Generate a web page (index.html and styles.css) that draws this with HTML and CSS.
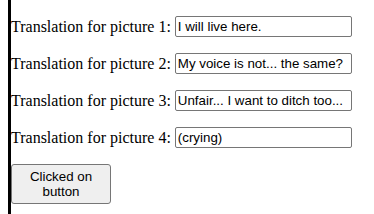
FILE: index.html
```html
<!DOCTYPE html>
<html lang="en">
<head>
  <meta charset="UTF-8">
  <meta name="viewport" content="width=device-width, initial-scale=1.0">
  <title>Translations</title>
  <link rel="stylesheet" href="styles.css">
</head>
<body>
  <div class="page">
    <p class="row">Translation for picture 1: <input type="text" class="answer" value="I will live here."></p>
    <p class="row">Translation for picture 2: <input type="text" class="answer" value="My voice is not... the same?"></p>
    <p class="row">Translation for picture 3: <input type="text" class="answer" value="Unfair... I want to ditch too..."></p>
    <p class="row">Translation for picture 4: <input type="text" class="answer" value="(crying)"></p>
    <button class="submit">Clicked on button</button>
  </div>
</body>
</html>
```

FILE: styles.css
```css
html, body {
  margin: 0;
  padding: 0;
  background-color: #fff;
}

.page {
  display: flow-root;
  margin-left: 8px;
  border-left: 3px solid #000;
  min-height: 100vh;
  font-family: "Liberation Serif", "Times New Roman", serif;
  font-size: 16px;
  color: #000;
}

.row {
  margin: 16px 0;
  line-height: 21px;
  height: 21px;
}

.answer {
  box-sizing: border-box;
  width: 177px;
  height: 21px;
  padding: 1px 2px;
  border: 1px solid #767676;
  border-radius: 2px;
  font-family: "Liberation Sans", Arial, sans-serif;
  font-size: 13.333px;
  color: #000;
  vertical-align: bottom;
}

.submit {
  display: block;
  width: 100px;
  height: 40px;
  padding: 1px 6px;
  background-color: #efefef;
  border: 1px solid #767676;
  border-radius: 3px;
  font-family: "Liberation Sans", Arial, sans-serif;
  font-size: 13.333px;
  color: #000;
  cursor: pointer;
}
```
